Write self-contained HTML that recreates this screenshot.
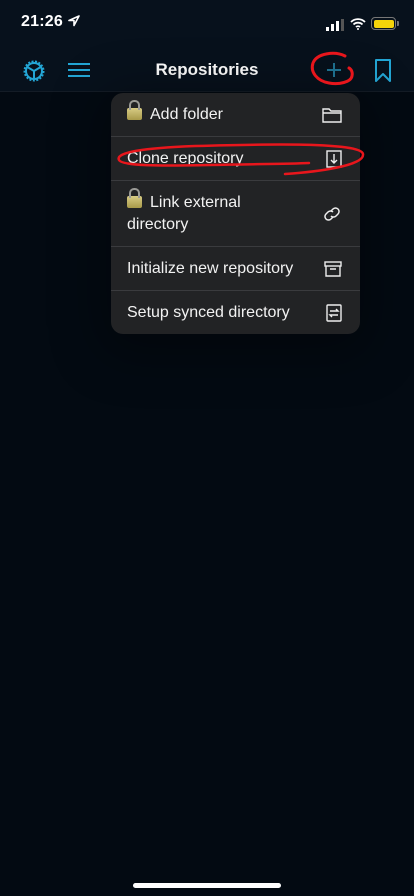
<!DOCTYPE html>
<html><head><meta charset="utf-8"><style>
*{margin:0;padding:0;box-sizing:border-box}
body{width:414px;height:896px;background:#030a12;font-family:"Liberation Sans",sans-serif;position:relative;overflow:hidden;color:#fff}
.top{position:absolute;left:0;top:0;width:414px;height:92px;background:#07111c;border-bottom:1px solid #141c26;z-index:2}
.time{position:absolute;left:21px;top:13px;font-size:16px;font-weight:bold;letter-spacing:.2px}
.title{position:absolute;left:0;width:414px;top:60px;text-align:center;font-size:17px;font-weight:bold;color:#fff}
.menu{position:absolute;left:111px;top:93px;width:249px;height:241px;background:#222325;border-radius:12px;overflow:hidden;box-shadow:0 10px 50px 10px rgba(0,0,0,.35);z-index:3}
.row{position:relative;border-bottom:1px solid #3a3b3e;font-size:16px;color:#f2f2f2;padding-left:16px}
.row:last-child{border-bottom:none}
.row svg{position:absolute;right:18px;top:50%;transform:translateY(-50%)}
.lock{display:inline-block;width:15px;height:12px;background:linear-gradient(#d8cc85,#a89a4a);border-radius:2px;position:relative;margin-right:8px;top:1px}
.lock:before{content:"";position:absolute;left:2px;top:-8px;width:7px;height:8px;border:2px solid #9a9a96;border-bottom:none;border-radius:5px 5px 0 0}
.home{position:absolute;left:133px;top:883px;width:148px;height:5px;border-radius:3px;background:#fff}
.ov{position:absolute;z-index:5}
</style></head><body>
<div class="top">
<div class="time">21:26 <svg width="12" height="12" viewBox="0 0 12 12" style="vertical-align:-1px"><path d="M11 1L1 5.5h5v5z" fill="none" stroke="#fff" stroke-width="1.6" stroke-linejoin="round"/></svg></div>
<svg style="position:absolute;left:326px;top:19px" width="18" height="12"><rect x="0" y="8" width="3" height="4" fill="#fff"/><rect x="5" y="5" width="3" height="7" fill="#fff"/><rect x="10" y="2" width="3" height="10" fill="#fff"/><rect x="15" y="0" width="3" height="12" fill="#555"/></svg>
<svg style="position:absolute;left:350px;top:18px" width="16" height="12" viewBox="0 0 16 12"><path d="M1 4a10 10 0 0 1 14 0M3.5 6.5a6.5 6.5 0 0 1 9 0M6 9a3 3 0 0 1 4 0" fill="none" stroke="#fff" stroke-width="1.8"/><circle cx="8" cy="11" r="1" fill="#fff"/></svg>
<div style="position:absolute;left:371px;top:17px;width:25px;height:13px;border:1px solid #777;border-radius:4px;padding:1.5px"><div style="width:100%;height:100%;background:#f5d40a;border-radius:2px"></div></div>
<div style="position:absolute;left:397px;top:21px;width:2px;height:5px;background:#777;border-radius:0 1px 1px 0"></div>
<svg style="position:absolute;left:21px;top:58px" width="26" height="26" viewBox="0 0 26 26"><g fill="none" stroke="#23a6d5" stroke-width="2"><circle cx="13" cy="13" r="9.5" stroke-dasharray="2 1.5"/><circle cx="13" cy="13" r="8"/><path d="M13 13L5.5 8.5M13 13l7.5-4.5M13 13v8.5"/></g></svg>
<svg style="position:absolute;left:67px;top:62px" width="24" height="16"><g stroke="#23a6d5" stroke-width="2"><path d="M1 2h22M1 8h22M1 14h22"/></g></svg>
<div class="title">Repositories</div>
<svg style="position:absolute;left:375px;top:59px" width="16" height="24"><path d="M1 1h14v21l-7-7-7 7z" fill="none" stroke="#23a6d5" stroke-width="2" stroke-linejoin="round"/></svg>
</div>
<svg class="ov" style="left:305px;top:48px" width="55" height="42" viewBox="0 0 55 42"><path d="M29 15v14M22 22h14" stroke="#1d6e8c" stroke-width="2"/><path d="M40 8C30 3 12 5 8 15C5 24 12 33 24 35C34 37 46 34 47 28C48 24 46 21 44 20" fill="none" stroke="#e8161c" stroke-width="3" stroke-linecap="round"/></svg>
<div class="menu">
<div class="row" style="height:44px;line-height:44px"><span class="lock"></span>Add folder
<svg width="20" height="16" viewBox="0 0 20 16"><path d="M1 2h6l2 2h10v11H1zM1 6h18" fill="none" stroke="#eee" stroke-width="1.4"/></svg></div>
<div class="row" style="height:44px;line-height:44px">Clone repository
<svg width="16" height="18" viewBox="0 0 16 18"><rect x="1" y="1" width="14" height="16" fill="none" stroke="#eee" stroke-width="1.4"/><path d="M8 4v9M5 10l3 3 3-3" fill="none" stroke="#eee" stroke-width="1.4"/></svg></div>
<div class="row" style="height:66px;padding-top:11px;line-height:22px"><span class="lock"></span>Link external<br>directory
<svg width="20" height="20" viewBox="0 0 20 20"><g fill="none" stroke="#eee" stroke-width="1.5"><path d="M9 7l2-2a3.5 3.5 0 0 1 5 5l-2 2a3.5 3.5 0 0 1-5 0"/><path d="M11 13l-2 2a3.5 3.5 0 0 1-5-5l2-2a3.5 3.5 0 0 1 5 0"/></g></svg></div>
<div class="row" style="height:44px;line-height:44px">Initialize new repository
<svg width="18" height="18" viewBox="0 0 18 18"><g fill="none" stroke="#eee" stroke-width="1.4"><rect x="1" y="2" width="16" height="4"/><path d="M2 6v10h14V6M6 9h6"/></g></svg></div>
<div class="row" style="height:43px;line-height:43px">Setup synced directory
<svg width="16" height="18" viewBox="0 0 16 18"><g fill="none" stroke="#eee" stroke-width="1.4"><rect x="1" y="1" width="14" height="16" rx="1"/><path d="M4 7h8l-2-2M12 11H4l2 2"/></g></svg></div>
</div>
<svg class="ov" style="left:115px;top:140px" width="252" height="38" viewBox="0 0 252 38"><path d="M170 34c30-2 80-8 78-20C246 2 150 4 80 6 30 8 0 12 4 20c3 6 40 6 90 5 50-1 80-1 100-2" fill="none" stroke="#e8161c" stroke-width="2.5" stroke-linecap="round"/></svg>
<div class="home"></div>
</body></html>
